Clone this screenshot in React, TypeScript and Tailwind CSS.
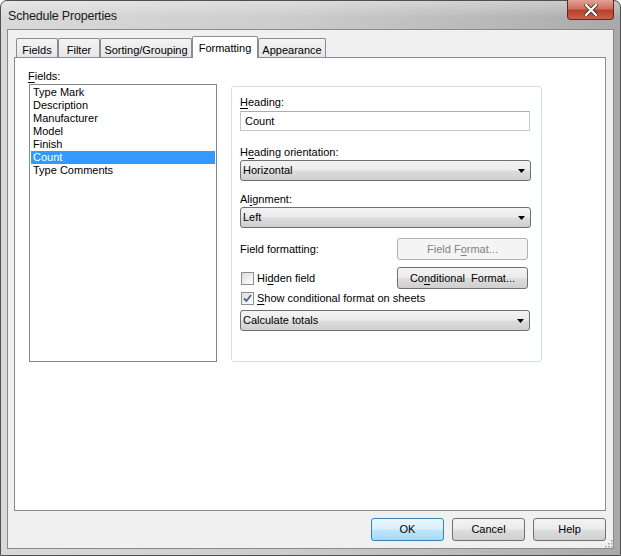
import React from 'react';

const font = { fontFamily: '"Liberation Sans", Arial, sans-serif' };

const btnFace =
  'bg-[linear-gradient(to_bottom,#f3f3f3_0%,#ebebeb_48%,#dddddd_52%,#cfcfcf_100%)]';

// access-key underline
function K({ children }: { children: React.ReactNode }) {
  return <span className="underline underline-offset-[2px] decoration-[1px]">{children}</span>;
}

function Arrow() {
  return (
    <svg width="7" height="4" viewBox="0 0 7 4">
      <path d="M0 0H7L3.5 4Z" fill="#000" />
    </svg>
  );
}

function Combo({ value, className = '' }: { value: string; className?: string }) {
  return (
    <div
      className={`flex items-center justify-between pl-[2px] pr-[5px] border border-[#707070] rounded-[3px] ${btnFace} ${className}`}
    >
      <span>{value}</span>
      <Arrow />
    </div>
  );
}

function Button({
  children,
  className = '',
  disabled = false,
  focused = false,
}: {
  children: React.ReactNode;
  className?: string;
  disabled?: boolean;
  focused?: boolean;
}) {
  let look = `border-[#707070] ${btnFace} text-black`;
  if (disabled) look = 'border-[#adb2b5] bg-[#f4f4f4] text-[#838383]';
  if (focused)
    look =
      'border-[#3c7fb1] bg-[linear-gradient(to_bottom,#eaf6fd_0%,#d9f0fc_48%,#bee6fd_52%,#a7d9f5_100%)] text-black';
  return (
    <div className={`flex items-center justify-center border rounded-[3px] ${look} ${className}`}>
      {children}
    </div>
  );
}

function CheckBox({ checked = false }: { checked?: boolean }) {
  return (
    <div className="w-[13px] h-[13px] border border-[#8e8f8f] bg-[linear-gradient(135deg,#dcdcdc,#ffffff)] flex items-center justify-center">
      {checked && (
        <svg width="9" height="9" viewBox="0 0 9 9">
          <path d="M1 4.5L3.5 7L8 1" fill="none" stroke="#4a5f97" strokeWidth="1.8" />
        </svg>
      )}
    </div>
  );
}

const tabs = [
  { label: 'Fields', w: 'w-[42px]' },
  { label: 'Filter', w: 'w-[42px]' },
  { label: 'Sorting/Grouping', w: 'w-[92px]' },
  { label: 'Formatting', w: 'w-[66px]', active: true },
  { label: 'Appearance', w: 'w-[68px]' },
];

const fields = ['Type Mark', 'Description', 'Manufacturer', 'Model', 'Finish', 'Count', 'Type Comments'];

export default function App() {
  return (
    <div className="w-[621px] h-[556px] text-[11px] text-black bg-white" style={font}>
      <div className="h-full flex flex-col border border-[#4f4f4f] rounded-t-[7px] bg-[linear-gradient(to_right,#d9d9d9_0%,#cdcdcd_45%,#b8b8b8_80%,#a9a9a9_100%)]">
        {/* title bar */}
        <div className="h-[28px] flex items-start justify-between pl-[7px] pr-[6px] bg-[linear-gradient(to_bottom,rgba(255,255,255,0.35),rgba(255,255,255,0)_60%)] rounded-t-[6px]">
          <span className="mt-[6px] text-[12.5px] text-[#1a1a1a] tracking-[-0.2px]">Schedule Properties</span>
          <div className="w-[47px] h-[20px] -mt-px flex items-center justify-center border border-[#5e2a22] border-t-0 rounded-b-[4px] bg-[linear-gradient(to_bottom,#e3a194_0%,#cf705f_45%,#b9402b_55%,#cf5e48_100%)]">
            <svg width="14" height="12" viewBox="0 0 14 12">
              <path d="M2 1L12 11M12 1L2 11" stroke="#3a3a3a" strokeWidth="4" strokeLinecap="square" />
              <path d="M2 1L12 11M12 1L2 11" stroke="#ffffff" strokeWidth="2.2" strokeLinecap="square" />
            </svg>
          </div>
        </div>

        {/* client area */}
        <div className="flex-1 flex px-[6px] pb-[6px]">
          <div className="flex-1 flex flex-col border border-[#8a8a8a] bg-[#f0f0f0] pl-[6px] pr-[7px] pt-[6px] pb-[7px]">
            {/* tab strip */}
            <div className="h-[21px] flex items-end pl-[2px] relative z-10">
              {tabs.map((t) =>
                t.active ? (
                  <div
                    key={t.label}
                    className={`${t.w} h-[22px] -mb-px flex justify-center pt-[3px] border border-b-0 border-[#898c95] rounded-t-[2px] bg-white`}
                  >
                    {t.label}
                  </div>
                ) : (
                  <div
                    key={t.label}
                    className={`${t.w} h-[19px] flex justify-center pt-[3px] border border-b-0 border-[#898c95] rounded-t-[2px] bg-[linear-gradient(to_bottom,#f4f4f4,#e6e6e6)]`}
                  >
                    {t.label}
                  </div>
                ),
              )}
            </div>

            {/* tab page */}
            <div className="h-[454px] border border-[#898c95] bg-white flex pl-[14px] pt-[12px]">
              <div className="flex flex-col">
                <div className="leading-[13px] h-[14px] -ml-px">
                  <K>F</K>ields:
                </div>
                <div className="w-[188px] h-[278px] border border-[#828790] bg-white pt-px px-px">
                  {fields.map((f) => (
                    <div
                      key={f}
                      className={`h-[13px] leading-[13px] pl-[2px] ${f === 'Count' ? 'bg-[#3399ff] text-white' : ''}`}
                    >
                      {f}
                    </div>
                  ))}
                </div>
              </div>

              {/* formatting group */}
              <div className="ml-[14px] mt-[16px] w-[311px] h-[276px] border border-[#d5dfe5] rounded-[3px] pl-[8px] pt-[8px] flex flex-col">
                <div className="leading-[15px]">
                  <K>H</K>eading:
                </div>
                <div className="mt-px w-[290px] h-[20px] border border-[#c3c7cd] border-t-[#abadb3] flex items-center pl-[4px]">
                  Count
                </div>

                <div className="mt-[14px] leading-[15px]">
                  H<K>e</K>ading orientation:
                </div>
                <Combo value="Horizontal" className="w-[291px] h-[21px]" />

                <div className="mt-[11px] leading-[15px]">
                  Al<K>i</K>gnment:
                </div>
                <Combo value="Left" className="w-[291px] h-[21px]" />

                <div className="mt-[10px] flex items-center w-[288px] justify-between">
                  <span>Field formatting:</span>
                  <Button disabled className="w-[131px] h-[22px]">
                    <span>
                      Field F<K>o</K>rmat...
                    </span>
                  </Button>
                </div>

                <div className="mt-[7px] flex items-center w-[288px] justify-between">
                  <div className="flex items-center gap-[3px] pl-px">
                    <CheckBox />
                    <span>
                      Hi<K>d</K>den field
                    </span>
                  </div>
                  <Button className="w-[131px] h-[22px]">
                    <span>
                      Co<K>n</K>ditional&nbsp; Format...
                    </span>
                  </Button>
                </div>

                <div className="mt-[2px] h-[14px] flex items-center gap-[3px] pl-px">
                  <CheckBox checked />
                  <span>
                    <K>S</K>how conditional format on sheets
                  </span>
                </div>

                <Combo value="Calculate totals" className="mt-[5px] w-[290px] h-[21px]" />
              </div>
            </div>

            {/* dialog buttons */}
            <div className="mt-[7px] h-[23px] flex justify-end gap-[8px] relative">
              <Button focused className="w-[73px] h-[23px]">
                OK
              </Button>
              <Button className="w-[73px] h-[23px]">Cancel</Button>
              <Button className="w-[73px] h-[23px]">Help</Button>
              <svg className="absolute right-[-7px] bottom-[-7px]" width="9" height="9" viewBox="0 0 9 9">
                <g fill="#a0a0a0">
                  <rect x="7" y="1" width="1.5" height="1.5" />
                  <rect x="4" y="4" width="1.5" height="1.5" />
                  <rect x="7" y="4" width="1.5" height="1.5" />
                  <rect x="1" y="7" width="1.5" height="1.5" />
                  <rect x="4" y="7" width="1.5" height="1.5" />
                  <rect x="7" y="7" width="1.5" height="1.5" />
                </g>
              </svg>
            </div>
          </div>
        </div>
      </div>
    </div>
  );
}
